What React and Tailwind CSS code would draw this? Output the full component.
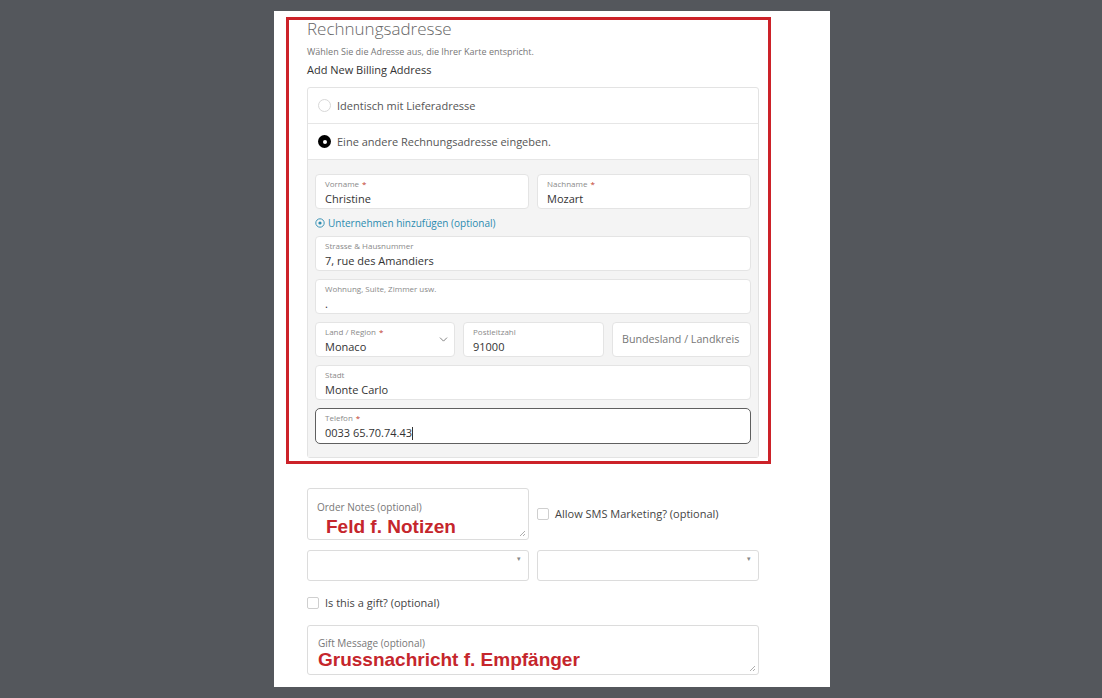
import { ChevronDown } from 'lucide-react'

const sans = { fontFamily: '"Open Sans", "Noto Sans", sans-serif' }
const arial = { fontFamily: '"Liberation Sans", Arial, sans-serif' }

function Field({ label, required, value, className = '' }) {
  return (
    <div className={`h-[35px] bg-white border border-[#e4e4e4] rounded-[4px] pl-[9px] flex flex-col ${className}`}>
      <div className="text-[8px] leading-[10px] text-[#8a8a8a] mt-[4px]">
        {label}
        {required && <span className="text-[#c0392b] ml-[3px]">*</span>}
      </div>
      <div className="text-[11px] leading-[14px] text-[#333] mt-[3px]">{value}</div>
    </div>
  )
}

function Check({ label }) {
  return (
    <label className="flex items-center gap-[6px] text-[11px] text-[#444]">
      <span className="w-[12px] h-[12px] border border-[#cfcfcf] rounded-[2px] bg-white" />
      {label}
    </label>
  )
}

function Grip() {
  return (
    <svg className="absolute right-[2px] bottom-[2px]" width="7" height="7" viewBox="0 0 7 7">
      <path d="M6 1 L1 6 M6 4 L4 6" stroke="#999" strokeWidth="0.8" />
    </svg>
  )
}

export default function App() {
  return (
    <div className="w-full h-[698px] bg-[#54575c] pl-[274px] pt-[11px]" style={sans}>
      <div className="w-[556px] h-[676px] bg-white pt-[6px] pl-[12px]">
        {/* highlighted billing block */}
        <div className="w-[485px] h-[447px] border-[3px] border-[#cc2229] pl-[18px] pr-[9px]">
          <h2 className="text-[17px] leading-[20px] font-light text-[#666] -mt-[1px]">Rechnungsadresse</h2>
          <p className="text-[9px] leading-[12px] text-[#777] mt-[7px]">Wählen Sie die Adresse aus, die Ihrer Karte entspricht.</p>
          <p className="text-[11px] leading-[14px] text-[#333] font-medium mt-[5px]">Add New Billing Address</p>

          <div className="mt-[10px] border border-[#e3e3e3] rounded-[3px]">
            <div className="h-[36px] flex items-center pl-[10px] gap-[6px] border-b border-[#e6e6e6]">
              <span className="w-[13px] h-[13px] rounded-full border border-[#d8d8d8]" />
              <span className="text-[11px] text-[#555] mt-[1px]">Identisch mit Lieferadresse</span>
            </div>
            <div className="h-[36px] flex items-center pl-[10px] gap-[6px] border-b border-[#e6e6e6]">
              <span className="w-[13px] h-[13px] rounded-full bg-black flex items-center justify-center">
                <span className="w-[4px] h-[4px] rounded-full bg-white" />
              </span>
              <span className="text-[11px] text-[#555] mt-[1px]">Eine andere Rechnungsadresse eingeben.</span>
            </div>
            <div className="bg-[#f4f4f4] px-[7px] pt-[14px] pb-[13px] flex flex-col">
              <div className="flex gap-[8px]">
                <Field label="Vorname" required value="Christine" className="flex-1" />
                <Field label="Nachname" required value="Mozart" className="flex-1" />
              </div>
              <div className="h-[27px] flex items-center gap-[3px] text-[10px] text-[#2b8bb0] pt-[1px]">
                <svg width="10" height="10" viewBox="0 0 10 10">
                  <circle cx="5" cy="5" r="4.2" fill="none" stroke="#2b8bb0" strokeWidth="0.9" />
                  <circle cx="5" cy="5" r="1.6" fill="#2b8bb0" />
                </svg>
                Unternehmen hinzufügen (optional)
              </div>
              <Field label="Strasse & Hausnummer" value="7, rue des Amandiers" />
              <Field label="Wohnung, Suite, Zimmer usw." value="." className="mt-[8px]" />
              <div className="flex gap-[8px] mt-[8px]">
                <div className="relative w-[140px]">
                  <Field label="Land / Region" required value="Monaco" />
                  <ChevronDown className="absolute right-[5px] top-[11px]" size={13} color="#666" strokeWidth={1.5} />
                </div>
                <Field label="Postleitzahl" value="91000" className="w-[141px]" />
                <div className="flex-1 h-[35px] bg-white border border-[#e4e4e4] rounded-[4px] pl-[9px] flex items-center text-[10.7px] text-[#777]">
                  Bundesland / Landkreis
                </div>
              </div>
              <Field label="Stadt" value="Monte Carlo" className="mt-[8px]" />
              <div className="mt-[8px] h-[36px] bg-white border-[1.5px] border-[#5f5f5f] rounded-[5px] pl-[9px] flex flex-col">
                <div className="text-[8px] leading-[10px] text-[#8a8a8a] mt-[4px]">
                  Telefon<span className="text-[#c0392b] ml-[3px]">*</span>
                </div>
                <div className="text-[11px] leading-[14px] text-[#333] mt-[3px] flex items-center">
                  0033 65.70.74.43<span className="w-px h-[13px] bg-[#333]" />
                </div>
              </div>
            </div>
          </div>
        </div>

        {/* order extras */}
        <div className="w-[452px] ml-[21px] mt-[24px]">
          <div className="flex gap-[8px] items-center">
            <div className="relative w-[222px] h-[52px] border border-[#dcdcdc] rounded-[3px] pl-[9px] pt-[11px]">
              <div className="text-[10px] leading-[14px] text-[#777]">Order Notes (optional)</div>
              <div className="text-[19px] leading-[22px] font-bold text-[#c5262c] ml-[9px] mt-[2px]" style={arial}>
                Feld f. Notizen
              </div>
              <Grip />
            </div>
            <Check label="Allow SMS Marketing? (optional)" />
          </div>
          <div className="flex gap-[8px] mt-[10px]">
            <div className="relative w-[222px] h-[31px] border border-[#dcdcdc] rounded-[3px]">
              <span className="absolute right-[7px] top-[3px] text-[7px] text-[#888]">▾</span>
            </div>
            <div className="relative flex-1 h-[31px] border border-[#dcdcdc] rounded-[3px]">
              <span className="absolute right-[7px] top-[3px] text-[7px] text-[#888]">▾</span>
            </div>
          </div>
          <div className="mt-[14px]">
            <Check label="Is this a gift? (optional)" />
          </div>
          <div className="relative mt-[13px] h-[50px] border border-[#dcdcdc] rounded-[3px] pl-[10px] pt-[10px]">
            <div className="text-[10px] leading-[14px] text-[#777]">Gift Message (optional)</div>
            <div className="text-[19px] leading-[20px] font-bold text-[#c5262c]" style={arial}>
              Grussnachricht f. Empfänger
            </div>
            <Grip />
          </div>
        </div>
      </div>
    </div>
  )
}
